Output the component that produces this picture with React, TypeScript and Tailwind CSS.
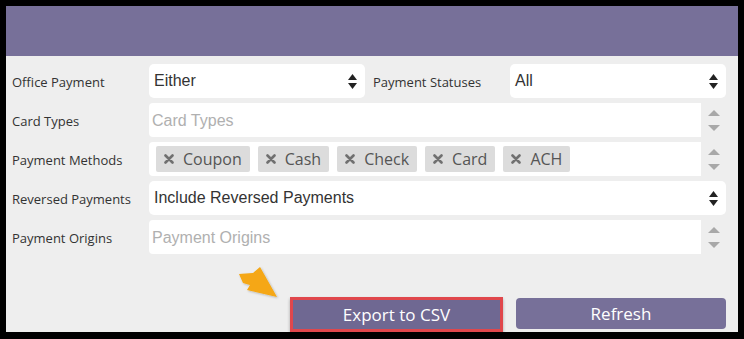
import { Fragment } from 'react';

const label = 'text-[13px] text-[#333] font-["Open_Sans",sans-serif]';

function SelectArrows() {
  return (
    <svg width="9" height="15" viewBox="0 0 9 15" className="shrink-0">
      <polygon points="4.5,0 9,6 0,6" fill="#222" />
      <polygon points="0,9 9,9 4.5,15" fill="#222" />
    </svg>
  );
}

function Spinner() {
  return (
    <div className="w-[25px] flex flex-col items-center justify-center gap-[9px]">
      <svg width="12" height="6" viewBox="0 0 12 6">
        <polygon points="6,0 12,6 0,6" fill="#a8a8a8" />
      </svg>
      <svg width="12" height="6" viewBox="0 0 12 6">
        <polygon points="0,0 12,0 6,6" fill="#a8a8a8" />
      </svg>
    </div>
  );
}

function Select({ value, className }: { value: string; className: string }) {
  return (
    <div className={`h-[34px] bg-white rounded-[5px] flex items-center pl-[5px] pr-[8px] ${className}`}>
      <span className='flex-1 text-[16px] text-[#333] font-["Liberation_Sans",Arial,sans-serif]'>{value}</span>
      <SelectArrows />
    </div>
  );
}

function Tag({ text }: { text: string }) {
  return (
    <div className="h-[26px] bg-[#dcdcdc] rounded-[2px] flex items-center pl-[8px] pr-[8px] gap-[9px]">
      <svg width="10" height="10" viewBox="0 0 10 10" className="shrink-0">
        <path d="M1.5 1.5 L8.5 8.5 M8.5 1.5 L1.5 8.5" stroke="#707070" strokeWidth="2.6" strokeLinecap="round" />
      </svg>
      <span className='text-[16px] text-[#555] font-["Open_Sans",sans-serif]'>{text}</span>
    </div>
  );
}

function MultiInput({ children, tags }: { children: React.ReactNode; tags?: boolean }) {
  return (
    <div className="flex w-[577px]">
      <div
        className={`w-[552px] h-[34px] bg-white rounded-l-[4px] flex items-center gap-[8px] ${tags ? 'pl-[7px]' : 'pl-[3px] pt-[2px]'}`}
      >
        {children}
      </div>
      <Spinner />
    </div>
  );
}

export default function App() {
  const rows = [
    { name: 'Card Types', placeholder: 'Card Types' },
    { name: 'Payment Methods', tags: ['Coupon', 'Cash', 'Check', 'Card', 'ACH'] },
    { name: 'Reversed Payments', select: 'Include Reversed Payments' },
    { name: 'Payment Origins', placeholder: 'Payment Origins' },
  ];

  return (
    <div className="w-[744px] h-[339px] bg-black pt-[6px] pl-[6px] pr-[6px] pb-[7px]">
      <div className="w-full h-full bg-[#eeeeee] flex flex-col">
        {/* Header */}
        <div className="h-[50px] bg-[#777099]" />

        {/* Filters */}
        <div className="flex flex-col gap-[5px] pt-[8px] pl-[6px]">
          <div className="flex items-center">
            <div className={`w-[137px] pt-[4px] ${label}`}>Office Payment</div>
            <Select value="Either" className="w-[216px]" />
            <div className={`w-[145px] pl-[8px] pt-[4px] ${label}`}>Payment Statuses</div>
            <Select value="All" className="w-[216px]" />
          </div>

          {rows.map(r => (
            <div key={r.name} className="flex items-center">
              <div className={`w-[137px] pt-[4px] ${label}`}>{r.name}</div>
              {r.select ? (
                <Select value={r.select} className="w-[577px]" />
              ) : (
                <MultiInput tags={!!r.tags}>
                  {r.tags ? (
                    <Fragment>
                      {r.tags.map(t => (
                        <Tag key={t} text={t} />
                      ))}
                    </Fragment>
                  ) : (
                    <span className='text-[16px] text-[#b0b0b0] font-["Liberation_Sans",Arial,sans-serif]'>
                      {r.placeholder}
                    </span>
                  )}
                </MultiInput>
              )}
            </div>
          ))}
        </div>

        {/* Actions */}
        <div className="flex items-start pl-[230px] mt-[8px]">
          <svg width="46" height="40" viewBox="0 0 46 40" className="shrink-0 mr-[8px]">
            <defs>
              <filter id="sh" x="-20%" y="-20%" width="140%" height="140%">
                <feDropShadow dx="1" dy="1" stdDeviation="1" floodColor="#000" floodOpacity="0.25" />
              </filter>
            </defs>
            <polygon points="24,5 41,35 11,28 14,23 7,21 3,12 17,11" fill="#f5a712" filter="url(#sh)" />
          </svg>
          <button className='mt-[35px] w-[213px] h-[35px] bg-[#6f6892] border-[3px] border-[#e0474c] text-white text-[17px] font-["Open_Sans",sans-serif] leading-none shadow-[0_2px_3px_rgba(0,0,0,0.3)]'>
            Export to CSV
          </button>
          <button className='ml-[13px] mt-[36px] w-[210px] h-[31px] bg-[#777099] rounded-[4px] text-white text-[17px] font-["Open_Sans",sans-serif] leading-none'>
            Refresh
          </button>
        </div>
      </div>
    </div>
  );
}
